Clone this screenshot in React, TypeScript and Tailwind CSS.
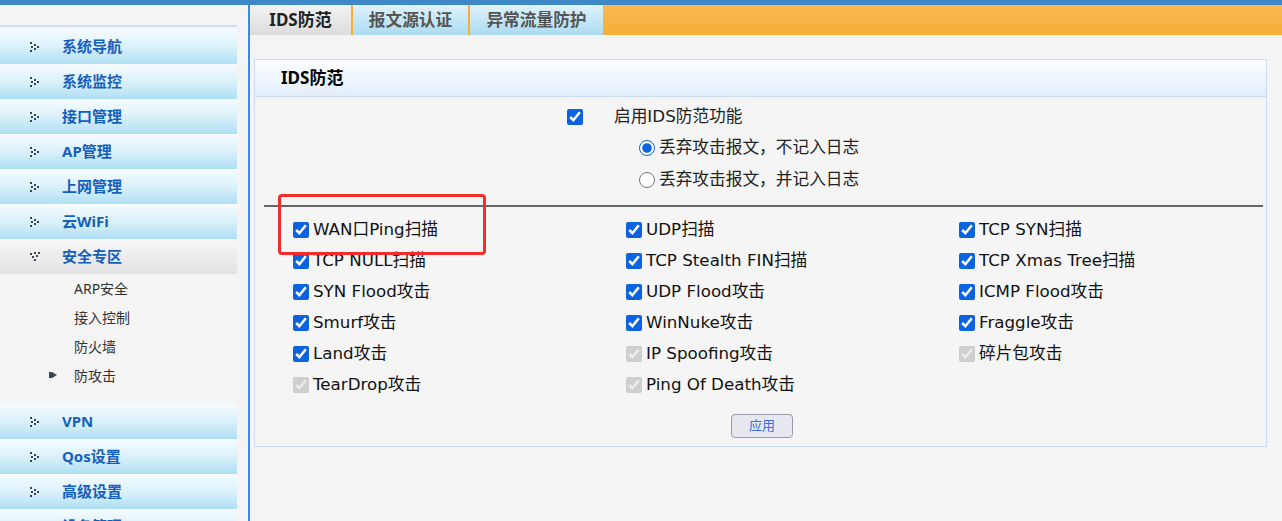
import React from "react";

const menuTop = ["系统导航", "系统监控", "接口管理", "AP管理", "上网管理", "云WiFi"];
const menuBottom = ["VPN", "Qos设置", "高级设置", "设备管理"];
const subMenu = ["ARP安全", "接入控制", "防火墙", "防攻击"];

const attacks: { label: string; disabled?: boolean }[] = [
  { label: "WAN口Ping扫描" },
  { label: "UDP扫描" },
  { label: "TCP SYN扫描" },
  { label: "TCP NULL扫描" },
  { label: "TCP Stealth FIN扫描" },
  { label: "TCP Xmas Tree扫描" },
  { label: "SYN Flood攻击" },
  { label: "UDP Flood攻击" },
  { label: "ICMP Flood攻击" },
  { label: "Smurf攻击" },
  { label: "WinNuke攻击" },
  { label: "Fraggle攻击" },
  { label: "Land攻击" },
  { label: "IP Spoofing攻击", disabled: true },
  { label: "碎片包攻击", disabled: true },
  { label: "TearDrop攻击", disabled: true },
  { label: "Ping Of Death攻击", disabled: true },
];

const labelFont = { fontFamily: '"DejaVu Sans", "Noto Sans CJK SC", sans-serif' };

function DotArrow({ open }: { open?: boolean }) {
  const dots = open
    ? [[0, 1], [4, 0], [8, 0], [2, 4], [6, 3], [4, 7]]
    : [[0, 0], [1, 4], [0, 8], [4, 2], [4, 6], [7, 4]];
  return (
    <svg width="11" height="10" viewBox="0 0 11 10" className="shrink-0">
      {dots.map(([x, y], i) => (
        <rect key={i} x={x} y={y} width="2" height="2" fill="#3a4452" />
      ))}
    </svg>
  );
}

function MenuItem({ label, open }: { label: string; open?: boolean }) {
  return (
    <div
      className={`h-[35px] w-[237px] flex items-center pl-[30px] gap-[21px] ${
        open
          ? "bg-gradient-to-b from-[#f7f7f7] to-[#e2e2e2]"
          : "bg-gradient-to-b from-[#f6fcff] via-[#dbf1fa] to-[#aedff3]"
      }`}
    >
      <DotArrow open={open} />
      <span className="text-[15px] font-bold text-[#1560bd] leading-none">{label}</span>
    </div>
  );
}

function Sidebar() {
  return (
    <div className="w-[250px] shrink-0 bg-[#f4f4f4] border-r-2 border-[#3f8ae0] pt-[20px]">
      <div className="w-[237px] h-[2px] bg-[#c9e0f0]" />
      <div className="h-[2px]" />
      {menuTop.map((m) => (
        <MenuItem key={m} label={m} />
      ))}
      <MenuItem label="安全专区" open />
      <div className="mb-[14px]">
        {subMenu.map((s, i) => (
          <div key={s} className="h-[29px] flex items-center relative pl-[74px]">
            {i === 3 && (
              <svg width="8" height="6" viewBox="0 0 8 6" className="absolute left-[49px] top-[11px]">
                <path d="M0 0h3l5 3-5 3H0z" fill="#3a4452" />
              </svg>
            )}
            <span className="text-[14px] text-[#333] leading-none">{s}</span>
          </div>
        ))}
      </div>
      {menuBottom.map((m) => (
        <MenuItem key={m} label={m} />
      ))}
    </div>
  );
}

function Tabs() {
  return (
    <div className="h-[30px] flex bg-gradient-to-b from-[#f8b852] to-[#f8ad35]">
      <div className="w-[101px] flex items-center justify-center bg-gradient-to-b from-[#f3f3f3] to-[#dcdcdc] text-[17px] font-bold text-[#222]">
        IDS防范
      </div>
      <div className="w-[2px] bg-[#f6ad3c]" />
      <div className="w-[115px] flex items-center justify-center bg-gradient-to-b from-[#dff2fb] to-[#aadcf1] text-[16.7px] font-bold text-[#555]">
        报文源认证
      </div>
      <div className="w-[2px] bg-[#f6ad3c]" />
      <div className="w-[133px] flex items-center justify-center bg-gradient-to-b from-[#dff2fb] to-[#aadcf1] text-[16.7px] font-bold text-[#555]">
        异常流量防护
      </div>
    </div>
  );
}

function Panel() {
  return (
    <div className="ml-[4px] mt-[24px] w-[1013px] h-[388px] border border-[#c9dcef] bg-[#f5f5f5] relative">
      <div className="h-[37px] border-b border-[#c9dcef] bg-gradient-to-b from-[#fbfdff] to-[#e3eefb] flex items-center pl-[26px]">
        <span className="text-[17px] font-bold text-black">IDS防范</span>
      </div>

      <div className="pt-[11px]" style={labelFont}>
        <div className="flex items-center h-[18px] pl-[312px]">
          <input type="checkbox" defaultChecked className="w-4 h-4 m-0 accent-[#0b63e0]" />
          <span className="ml-[31px] text-[16.7px] text-[#222]">启用IDS防范功能</span>
        </div>
        <div className="pl-[384px] mt-[13px] flex flex-col gap-[14px]">
          <label className="flex items-center h-[18px]">
            <input type="radio" name="mode" defaultChecked className="w-4 h-4 m-0 accent-[#0b63e0]" />
            <span className="ml-[4px] text-[16.7px] text-[#222]">丢弃攻击报文，不记入日志</span>
          </label>
          <label className="flex items-center h-[18px]">
            <input type="radio" name="mode" className="w-4 h-4 m-0" />
            <span className="ml-[4px] text-[16.7px] text-[#222]">丢弃攻击报文，并记入日志</span>
          </label>
        </div>

        <div className="ml-[9px] mr-[3px] mt-[16px] h-[2px] bg-[#666]" />

        <div className="grid grid-cols-[333px_333px_1fr] pl-[38px] pt-[7px]">
          {attacks.map((a) => (
            <label key={a.label} className="h-[31px] flex items-center">
              <input
                type="checkbox"
                defaultChecked
                disabled={a.disabled}
                className="w-4 h-4 m-0 accent-[#0b63e0]"
              />
              <span className="ml-[4px] text-[16.7px] text-[#111] whitespace-nowrap">{a.label}</span>
            </label>
          ))}
        </div>

        <div className="flex justify-center mt-[14px] pl-[3px]">
          <button className="w-[62px] h-[24px] rounded-[4px] border border-[#9a9aa6] bg-[#e7e7f0] text-[13px] text-[#3a6fe0]">
            应用
          </button>
        </div>
      </div>

      <div className="absolute left-[23px] top-[134px] w-[208px] h-[61px] border-[3px] border-[#f42c2c] rounded-[4px] pointer-events-none" />
    </div>
  );
}

export default function App() {
  return (
    <div
      className="w-[1282px] h-[521px] overflow-hidden bg-[#f4f4f4] flex flex-col"
      style={{ fontFamily: '"Noto Sans", "Noto Sans CJK SC", sans-serif' }}
    >
      <div className="h-[5px] bg-[#3f88c8] shrink-0" />
      <div className="flex flex-1 min-h-0">
        <Sidebar />
        <div className="flex-1 min-w-0">
          <Tabs />
          <Panel />
        </div>
      </div>
    </div>
  );
}
